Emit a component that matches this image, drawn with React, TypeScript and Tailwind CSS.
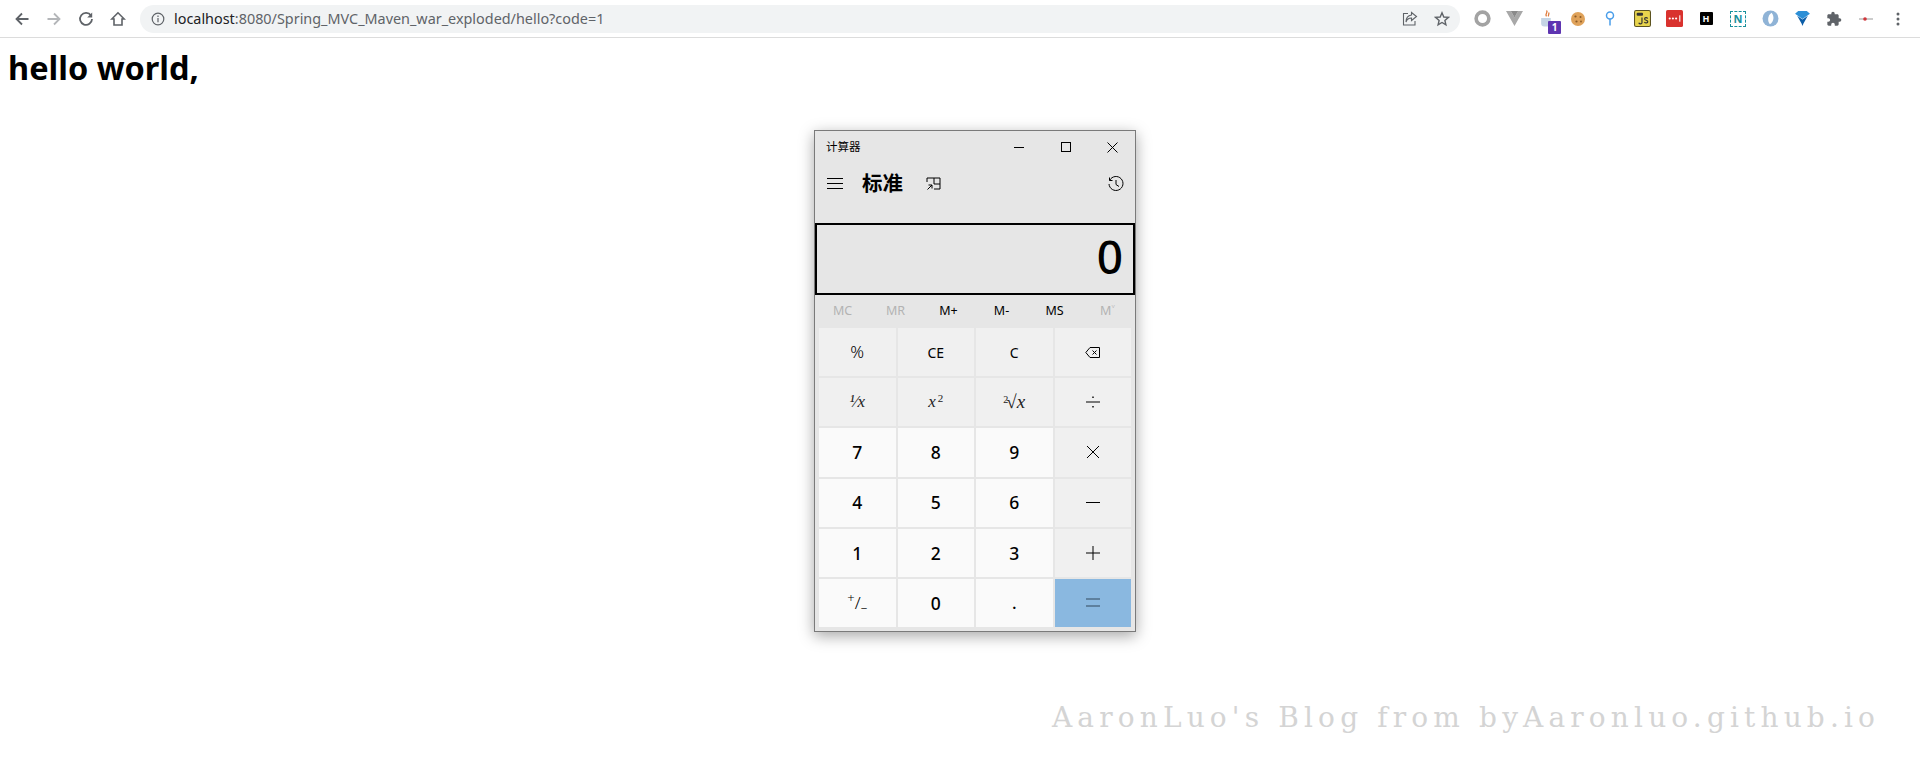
import React from "react";

const Cell = ({ children }: any) => <div className="relative flex h-8 w-8 shrink-0 items-center justify-center">{children}</div>;

function Toolbar() {
  return (
    <div className="flex h-[38px] items-center border-b border-[#dcdcdc] bg-white pr-[6px] pl-[6px]">
      <Cell>
        <svg width="16" height="16" viewBox="0 0 16 16" fill="none" stroke="#5f6368" strokeWidth="1.8"><path d="M14.5 8H2.5M8 2.5 2.5 8 8 13.5" /></svg>
      </Cell>
      <Cell>
        <svg width="16" height="16" viewBox="0 0 16 16" fill="none" stroke="#b4b6b9" strokeWidth="1.8"><path d="M1.5 8h12M8 2.5 13.5 8 8 13.5" /></svg>
      </Cell>
      <Cell>
        <svg width="16" height="16" viewBox="0 0 16 16" fill="none" stroke="#5f6368" strokeWidth="1.8"><path d="M13 4.6A6 6 0 1 0 14 8" /><path d="M14.2 1.6v5h-5z" fill="#5f6368" stroke="none" /></svg>
      </Cell>
      <Cell>
        <svg width="16" height="16" viewBox="0 0 16 16" fill="none" stroke="#5f6368" strokeWidth="1.6"><path d="M8 1.8 1.8 8H4v6h8V8h2.2z" /></svg>
      </Cell>
      <div className="ml-[6px] flex h-[28px] flex-1 items-center rounded-full bg-[#f1f3f4] pr-[2px] pl-[11px]">
        <svg width="14" height="14" viewBox="0 0 14 14" fill="none" stroke="#5f6368" strokeWidth="1.2"><circle cx="7" cy="7" r="5.8" /><path d="M7 6v4.2M7 3.6v1.4" /></svg>
        <span className="ml-[9px] font-['Noto_Sans',sans-serif] text-[14.4px] text-[#5f6368]">
          <span className="text-[#202124]">localhost</span>:8080/Spring_MVC_Maven_war_exploded/hello?code=1
        </span>
        <div className="flex-1" />
        <Cell>
          <svg width="16" height="16" viewBox="0 0 16 16" fill="none" stroke="#5f6368" strokeWidth="1.1"><path d="M6 2.5H1.5V14H13V10" /><path d="M9.5 1.5 14.5 5.5 9.5 9.5V7C7 7 5 8 4 11 4 7.5 6 4.5 9.5 4z" /></svg>
        </Cell>
        <Cell>
          <svg width="16" height="16" viewBox="0 0 16 16" fill="none" stroke="#5f6368" strokeWidth="1.4"><path d="M8 1.8 9.8 6l4.6.4-3.5 3 1 4.5L8 11.5 4.1 13.9l1-4.5-3.5-3L6.2 6z" /></svg>
        </Cell>
      </div>
      <div className="ml-[6px] flex">
        <Cell>
          <svg width="17" height="17" viewBox="0 0 16 16" fill="none" stroke="#a3a3a3" strokeWidth="3.4"><circle cx="8" cy="8" r="6" /></svg>
        </Cell>
        <Cell>
          <svg width="17" height="15" viewBox="0 0 16 14"><path d="M0 0h4.5L8 6l3.5-6H16L8 14z" fill="#a8a8a8" /><path d="M4.5 0h7L8 6z" fill="#8a8a8a" /></svg>
        </Cell>
        <Cell>
          <svg width="15" height="20" viewBox="0 0 14 18"><path d="M7 1c2 2-2 3 0 5.500M9 3c1 2-1 2 0 3.500" fill="none" stroke="#e07a3a" strokeWidth="1.2" /><path d="M2 8h9v5a3 3 0 0 1-3 3H5a3 3 0 0 1-3-3z" fill="#c5d5e5" /></svg>
          <span className="absolute right-[1px] bottom-[1px] flex h-[13px] w-[13px] items-center justify-center rounded-[1px] bg-[#5e35b1] font-['Noto_Sans',sans-serif] text-[10px] leading-none font-bold text-white">1</span>
        </Cell>
        <Cell>
          <svg width="16" height="16" viewBox="0 0 16 16"><circle cx="8" cy="8" r="7" fill="#dfa25a" /><circle cx="5.500" cy="5.500" r="1.100" fill="#8a5a25" /><circle cx="10.500" cy="6" r="1" fill="#8a5a25" /><circle cx="6.500" cy="10.500" r="1.100" fill="#8a5a25" /><circle cx="11" cy="10.500" r="0.900" fill="#8a5a25" /></svg>
        </Cell>
        <Cell>
          <svg width="12" height="17" viewBox="0 0 12 16" fill="none" stroke="#4a9eea" strokeWidth="1.500"><circle cx="6" cy="5" r="3.500" /><path d="M6 8.500V15" /></svg>
        </Cell>
        <Cell>
          <svg width="17" height="17" viewBox="0 0 16 16"><rect x="0.500" y="0.500" width="15" height="15" rx="1.500" fill="#e8d44d" stroke="#5c5320" /><rect x="2.500" y="2.500" width="6" height="3" rx="1" fill="#333" /><path d="M7.500 7v5c0 1.500-2.500 1.500-3 0M13 8c-1-1.200-3-1-3 .4 0 1.600 3 1 3 2.600 0 1.400-2.300 1.500-3.300.3" fill="none" stroke="#333" strokeWidth="1.100" /></svg>
        </Cell>
        <Cell>
          <svg width="17" height="17" viewBox="0 0 16 16"><rect width="16" height="16" rx="1.500" fill="#d9322e" /><circle cx="3.500" cy="8" r="1" fill="#fff" /><circle cx="6.500" cy="8" r="1" fill="#fff" /><circle cx="9.500" cy="8" r="1" fill="#fff" /><rect x="12.500" y="5" width="1" height="6" fill="#fff" /></svg>
        </Cell>
        <Cell>
          <div className="flex h-[13px] w-[13px] items-center justify-center rounded-[1px] bg-black font-['Noto_Sans',sans-serif] text-[9px] leading-none font-bold text-white">H</div>
        </Cell>
        <Cell>
          <div className="flex h-[16px] w-[16px] items-center justify-center border border-dashed border-[#18909c] font-['Noto_Sans',sans-serif] text-[11px] leading-none font-bold text-[#18909c]">N</div>
        </Cell>
        <Cell>
          <svg width="17" height="17" viewBox="0 0 16 16"><circle cx="8" cy="8" r="7.500" fill="#8fb3d6" /><path d="M9 2.500C5 5 5 11 7.500 13.500 11 11 12 6 9 2.500z" fill="#fff" /></svg>
        </Cell>
        <Cell>
          <svg width="17" height="17" viewBox="0 0 16 16"><path d="M1 3.500 4 1h8l3 2.500-7 5z" fill="#2c8fd6" /><path d="M3 5.500 8 9l5-3.500L8.800 13 8 15 7.200 13z" fill="#0c5ea8" /></svg>
        </Cell>
        <Cell>
          <svg width="16" height="16" viewBox="0 0 24 24" fill="#5f6368"><path d="M20.500 11H19V7c0-1.100-.9-2-2-2h-4V3.500a2.500 2.500 0 0 0-5 0V5H4c-1.100 0-2 .9-2 2v3.800h1.500a2.700 2.700 0 0 1 0 5.400H2V20c0 1.100.9 2 2 2h3.800v-1.500a2.700 2.700 0 0 1 5.400 0V22H17c1.100 0 2-.9 2-2v-4h1.500a2.500 2.500 0 0 0 0-5z" /></svg>
        </Cell>
        <Cell>
          <svg width="14" height="6" viewBox="0 0 14 6"><path d="M0 3h14" stroke="#999" strokeWidth="1" /><circle cx="6" cy="3" r="1.800" fill="#d0353a" /></svg>
        </Cell>
        <Cell>
          <svg width="4" height="14" viewBox="0 0 4 14" fill="#5f6368"><circle cx="2" cy="2" r="1.500" /><circle cx="2" cy="7" r="1.500" /><circle cx="2" cy="12" r="1.500" /></svg>
        </Cell>
      </div>
    </div>
  );
}

const Mem = ({ children, on }: any) => (
  <div className={`flex flex-1 items-center justify-center text-[12.5px] ${on ? "text-black" : "text-[#b3b3b3]"}`}>{children}</div>
);

const Btn = ({ children, kind = "op", cls = "" }: any) => {
  const bg = kind === "num" ? "bg-[#fafafa]" : kind === "eq" ? "bg-[#8ab8e0]" : "bg-[#f0f0f0]";
  return <div className={`flex items-center justify-center ${bg} ${cls}`}>{children}</div>;
};

const Digit = ({ v }: { v: string }) => (
  <Btn kind="num" cls="text-[17.5px] font-medium text-black">{v}</Btn>
);

const serif = "font-['Liberation_Serif',serif] italic font-light text-[#222]";

function Calculator() {
  return (
    <div className="mt-[40px] ml-[814px] flex h-[502px] w-[322px] flex-col border border-[#7a7a7a] bg-[#e6e6e6] font-['Noto_Sans','Noto_Sans_CJK_SC',sans-serif] text-black shadow-[0_4px_14px_rgba(0,0,0,0.35)]">
      <div className="flex h-[32px] shrink-0 items-center pl-[11px]">
        <span className="text-[11.5px]">计算器</span>
        <div className="flex-1" />
        <div className="flex w-[138px] items-center">
          <div className="flex w-[46px] justify-center">
            <svg className="-translate-x-[1px]" width="10" height="10" viewBox="0 0 10 10" stroke="#000" fill="none"><path d="M0 5.500h10" /></svg>
          </div>
          <div className="flex w-[46px] justify-center">
            <svg width="10" height="10" viewBox="0 0 10 10" stroke="#000" fill="none"><rect x="0.500" y="0.500" width="9" height="9" /></svg>
          </div>
          <div className="flex w-[46px] justify-center">
            <svg width="11" height="11" viewBox="0 0 11 11" stroke="#000" fill="none"><path d="M.5.500l10 10M10.500.500l-10 10" /></svg>
          </div>
        </div>
      </div>
      <div className="flex h-[41px] shrink-0 items-center pr-[11px] pl-[12px]">
        <svg width="16" height="11" viewBox="0 0 16 11" stroke="#000" fill="none"><path d="M0 .500h16M0 5.500h16M0 10.500h16" /></svg>
        <span className="ml-[19px] text-[20.5px] leading-none font-bold">标准</span>
        <svg className="ml-[23px]" width="15" height="14" viewBox="0 0 15 14" stroke="#000" fill="none"><path d="M1 5V1h13v11H8M8 1v6h6M1.500 12.500 6 8M2.500 8H6v3.500" /></svg>
        <div className="flex-1" />
        <svg width="16" height="16" viewBox="0 0 16 16" stroke="#000" fill="none"><path d="M1.800 4.200A7 7 0 1 1 1 8" /><path d="M1.500 1.500v3h3M8 4v4.500l3 2" /></svg>
      </div>
      <div className="mt-[19px] flex h-[72px] shrink-0 items-center justify-end border-2 border-black pr-[10px] pb-[6px] text-[46px] leading-none font-medium">
        0
      </div>
      <div className="flex h-[33px] shrink-0 px-[1px]">
        <Mem>MC</Mem>
        <Mem>MR</Mem>
        <Mem on>M+</Mem>
        <Mem on>M-</Mem>
        <Mem on>MS</Mem>
        <Mem>M˅</Mem>
      </div>
      <div className="grid flex-1 grid-cols-4 grid-rows-6 gap-[2px] px-[4px] pb-[4px]">
        <Btn cls="text-[17px] font-light">%</Btn>
        <Btn cls="text-[14px]">CE</Btn>
        <Btn cls="text-[14px]">C</Btn>
        <Btn>
          <svg width="15" height="11" viewBox="0 0 15 11" stroke="#000" fill="none"><path d="M5 .500h9.500v10H5L.8 5.500zM7.500 3.500l4 4M11.500 3.500l-4 4" /></svg>
        </Btn>
        <Btn cls={`${serif} text-[17px]`}><span>¹⁄x</span></Btn>
        <Btn cls={`${serif} text-[17px]`}><span>x<sup className="ml-[2px] text-[11px] not-italic">2</sup></span></Btn>
        <Btn cls={`${serif} text-[19px]`}><span><sup className="mr-[-2px] text-[10px] not-italic">2</sup>√x</span></Btn>
        <Btn>
          <svg width="14" height="14" viewBox="0 0 14 14" stroke="#000" fill="none"><path d="M0 7h14" /><path d="M7 1.500v1.500M7 11v1.500" strokeWidth="1.400" /></svg>
        </Btn>
        <Digit v="7" />
        <Digit v="8" />
        <Digit v="9" />
        <Btn>
          <svg width="14" height="14" viewBox="0 0 14 14" stroke="#000" fill="none"><path d="M1 1l12 12M13 1 1 13" /></svg>
        </Btn>
        <Digit v="4" />
        <Digit v="5" />
        <Digit v="6" />
        <Btn>
          <svg width="14" height="14" viewBox="0 0 14 14" stroke="#000" fill="none"><path d="M0 6.500h14" /></svg>
        </Btn>
        <Digit v="1" />
        <Digit v="2" />
        <Digit v="3" />
        <Btn>
          <svg width="14" height="14" viewBox="0 0 14 14" stroke="#000" fill="none"><path d="M0 7h14M7 0v14" /></svg>
        </Btn>
        <Btn kind="num" cls="text-[17px] font-light"><span><sup className="text-[13px]">+</sup>/<sub className="text-[13px]">–</sub></span></Btn>
        <Digit v="0" />
        <Btn kind="num" cls="text-[17px] font-medium">.</Btn>
        <Btn kind="eq">
          <svg width="14" height="9" viewBox="0 0 14 9" stroke="#33485c" fill="none" strokeWidth="1.200"><path d="M0 1h14M0 8h14" /></svg>
        </Btn>
      </div>
    </div>
  );
}

export default function App() {
  return (
    <div className="relative h-[764px] w-[1920px] overflow-hidden bg-white">
      <Toolbar />
      <h1 className="mt-[8px] ml-[8px] h-[44px] font-['Noto_Sans',sans-serif] text-[32.5px] leading-[44px] font-bold text-black">hello world,</h1>
      <Calculator />
      <div className="absolute top-[698px] left-[1052px] font-['DejaVu_Serif',serif] text-[28px] leading-[40px] tracking-[5.15px] whitespace-nowrap text-[#d4d4d4]">
        AaronLuo's Blog from byAaronluo.github.io
      </div>
    </div>
  );
}
